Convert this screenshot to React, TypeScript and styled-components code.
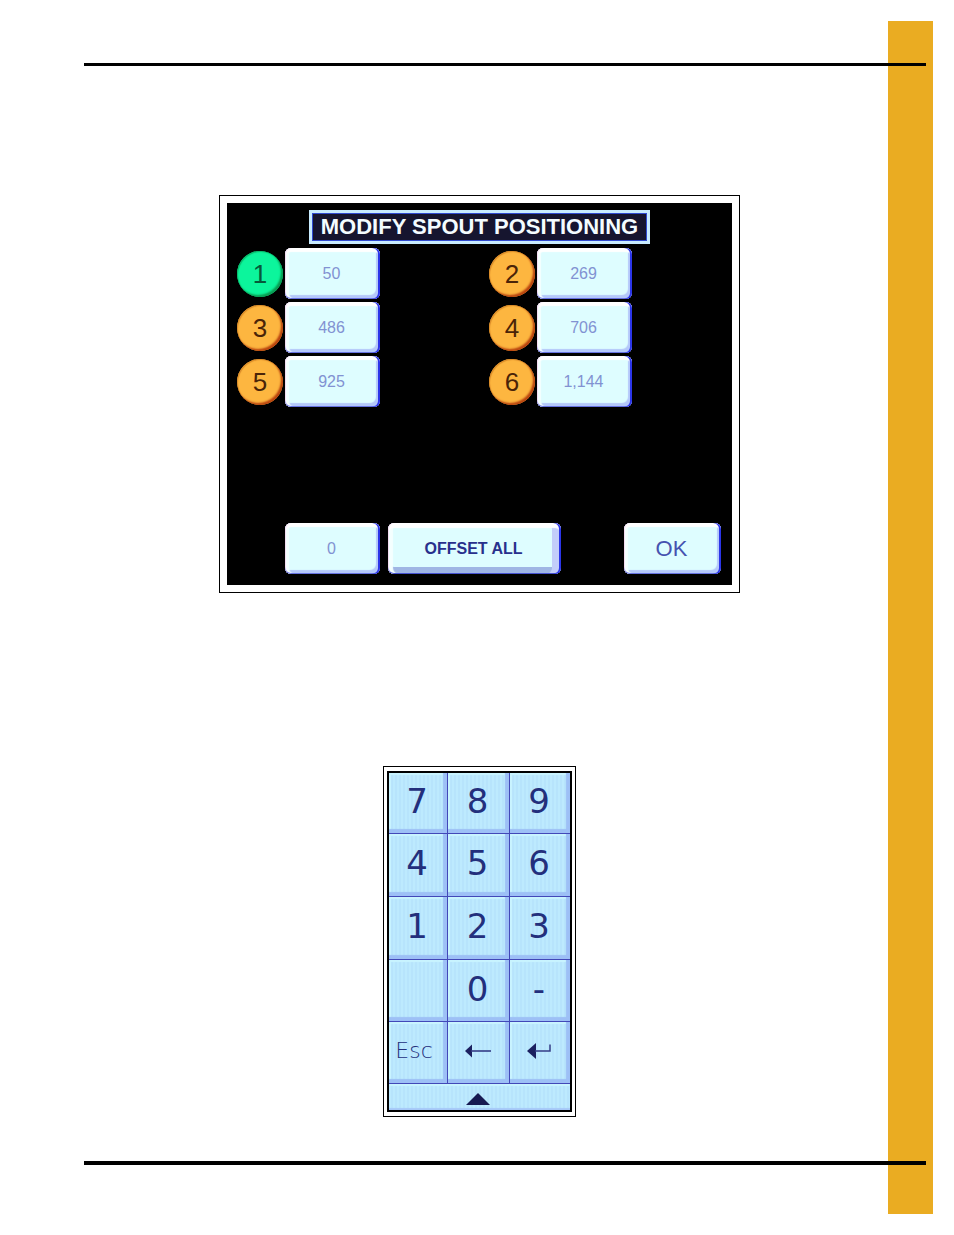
import React from "react";
import styled, { createGlobalStyle } from "styled-components";

const GlobalStyle = createGlobalStyle`
  *, *::before, *::after { box-sizing: border-box; }
  body {
    margin: 0;
    background: #ffffff;
    font-family: "Liberation Sans", Arial, sans-serif;
  }
  button { font-family: inherit; }
`;

const Page = styled.div`
  position: relative;
  display: flex;
  flex-direction: column;
  min-height: 100vh;
  padding: 63px 28px 70px 84px;
`;

const Stripe = styled.div`
  position: absolute;
  top: 21px;
  right: 21px;
  bottom: 21px;
  width: 45px;
  background: #eaac22;
`;

const Rule = styled.hr<{ $thickness: number }>`
  position: relative;
  width: 100%;
  height: ${(p) => p.$thickness}px;
  margin: 0;
  border: 0;
  background: #000000;
`;

const Content = styled.main`
  flex: 1;
  display: flex;
  flex-direction: column;
  align-items: center;
  gap: 173px;
  padding: 129px 51px 44px 0;
`;

const Figure = styled.section<{ $width: number; $pad: string }>`
  width: 100%;
  max-width: ${(p) => p.$width}px;
  padding: ${(p) => p.$pad};
  border: 1px solid #000000;
  background: #ffffff;
`;

const Screen = styled.div`
  display: flex;
  flex-direction: column;
  padding: 7px 10px 11px;
  background: #000000;
`;

const Title = styled.h1`
  align-self: center;
  margin: 0 0 4px;
  padding: 1px 9px;
  border: 3px solid #c9ecff;
  outline: 1px solid #2f4ad0;
  outline-offset: -4px;
  background: #16152f;
  color: #f4fcff;
  font-size: 22px;
  font-weight: 700;
  line-height: 26px;
  white-space: nowrap;
`;

const SpoutGrid = styled.div`
  display: grid;
  grid-template-columns: 252px 1fr;
  row-gap: 3px;
`;

const Spout = styled.div`
  display: flex;
  align-items: center;
  gap: 2px;
`;

const Badge = styled.span<{ $active: boolean }>`
  display: flex;
  align-items: center;
  justify-content: center;
  width: 46px;
  height: 46px;
  border-radius: 50%;
  background: ${(p) => (p.$active ? "#0cf59c" : "#fdb640")};
  box-shadow:
    inset -2px -2px 2px ${(p) => (p.$active ? "#0a9a50" : "#b8420e")},
    inset 1px 1px 1px ${(p) => (p.$active ? "#09b868" : "#d98a28")};
  color: ${(p) => (p.$active ? "#06583a" : "#4a2408")};
  font-size: 26px;
  line-height: 30px;
`;

const TouchButton = styled.button<{ $width: number }>`
  width: ${(p) => p.$width}px;
  height: 51px;
  padding: 0 2px 0 0;
  border: 0;
  border-radius: 6px;
  background: #defdff;
  box-shadow:
    inset -2px 0 0 #2b35e8,
    inset 0 -1px 0 #6672e0,
    inset 1px 0 0 #f3dcf0,
    inset 0 4px 1px #ffffff,
    inset 4px 0 1px #f4ffff,
    inset -4px -4px 1px #b4c8fa;
  color: #8292d2;
  font-size: 16px;
  line-height: 20px;
`;

const OffsetButton = styled(TouchButton)`
  box-shadow:
    inset -2px 0 0 #2b35e8,
    inset 0 -1px 0 #4652d0,
    inset 1px 0 0 #f3dcf0,
    inset 0 5px 1px #ffffff,
    inset 5px 0 1px #f4ffff,
    inset -9px 0 0 #c3cdfa,
    inset 0 -7px 0 #9fb6e4;
  color: #28308c;
  font-weight: 700;
`;

const OkButton = styled(TouchButton)`
  margin-left: auto;
  color: #4652b0;
  font-size: 22px;
`;

const Actions = styled.div`
  display: flex;
  gap: 8px;
  margin-top: 116px;
  padding: 0 1px 0 48px;
`;

const Keypad = styled.div`
  display: grid;
  grid-template-columns: 58fr 61fr 60fr;
  grid-template-rows: 60px 62px 62px 61px 61px 26px;
  gap: 1px;
  border: 2px solid #000000;
  background: #4248b8;
`;

const Key = styled.button<{ $small?: boolean }>`
  display: flex;
  align-items: center;
  justify-content: center;
  padding: ${(p) => (p.$small ? "0 8px 4px 0" : "0 2px 4px 0")};
  border: 0;
  background: repeating-linear-gradient(90deg, #bdeafe 0 2px, #b7e4fc 2px 4px);
  box-shadow:
    inset -4px -4px 1px #9dc0f6,
    inset 2px 2px 1px #c9f4ff;
  color: #232f7c;
  font-family: "DejaVu Sans", Verdana, sans-serif;
  font-size: ${(p) => (p.$small ? 22 : 34)}px;
  font-weight: ${(p) => (p.$small ? 200 : 400)};
  line-height: 40px;
`;

const WideKey = styled(Key)`
  grid-column: 1 / -1;
  padding: 3px 4px 0 0;
  box-shadow: inset 0 -2px 1px #a6c8f8, inset 0 2px 1px #c9f4ff;
`;

const spouts = [
  { id: 1, value: "50", active: true },
  { id: 2, value: "269", active: false },
  { id: 3, value: "486", active: false },
  { id: 4, value: "706", active: false },
  { id: 5, value: "925", active: false },
  { id: 6, value: "1,144", active: false },
];

const digitKeys = ["7", "8", "9", "4", "5", "6", "1", "2", "3", "", "0", "-"];

const BackspaceIcon = () => (
  <svg width="26" height="14" viewBox="0 0 26 14" aria-hidden="true">
    <path d="M0 7 L7 0.5 V13.5 Z" fill="#1c2160" />
    <path d="M6 7 H26" stroke="#343c86" strokeWidth="1.6" />
  </svg>
);

const EnterIcon = () => (
  <svg width="24" height="16" viewBox="0 0 24 16" aria-hidden="true">
    <path d="M0 8 L9 0 V16 Z" fill="#1c2160" />
    <path d="M8 8 H23 V1.5" fill="none" stroke="#343c86" strokeWidth="1.5" />
  </svg>
);

const UpIcon = () => (
  <svg width="24" height="12" viewBox="0 0 24 12" aria-hidden="true">
    <path d="M12 0 L24 12 H0 Z" fill="#171a52" />
  </svg>
);

export default function App() {
  return (
    <>
      <GlobalStyle />
      <Page>
        <Stripe />
        <Rule $thickness={3} />
        <Content>
          <Figure $width={521} $pad="7px" aria-label="Spout positioning">
            <Screen>
              <Title>MODIFY SPOUT POSITIONING</Title>
              <SpoutGrid>
                {spouts.map((s) => (
                  <Spout key={s.id}>
                    <Badge $active={s.active}>{s.id}</Badge>
                    <TouchButton type="button" $width={95} aria-label={`Spout ${s.id} position ${s.value}`}>
                      {s.value}
                    </TouchButton>
                  </Spout>
                ))}
              </SpoutGrid>
              <Actions>
                <TouchButton type="button" $width={95}>0</TouchButton>
                <OffsetButton type="button" $width={173}>OFFSET ALL</OffsetButton>
                <OkButton type="button" $width={97}>OK</OkButton>
              </Actions>
            </Screen>
          </Figure>
          <Figure $width={193} $pad="4px 3px" aria-label="Numeric keypad">
            <Keypad>
              {digitKeys.map((k, i) => (
                <Key type="button" key={i} aria-label={k || "Blank"}>{k}</Key>
              ))}
              <Key type="button" $small>Esc</Key>
              <Key type="button" aria-label="Backspace"><BackspaceIcon /></Key>
              <Key type="button" aria-label="Enter"><EnterIcon /></Key>
              <WideKey type="button" aria-label="Expand"><UpIcon /></WideKey>
            </Keypad>
          </Figure>
        </Content>
        <Rule $thickness={4} />
      </Page>
    </>
  );
}
